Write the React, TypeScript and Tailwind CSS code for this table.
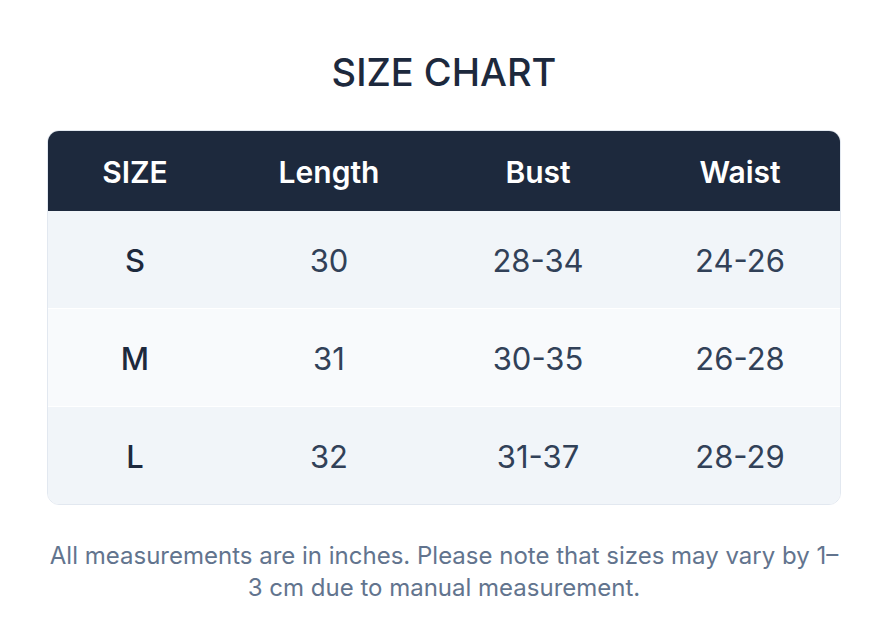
const rows = [
  { size: 'S', length: '30', bust: '28-34', waist: '24-26' },
  { size: 'M', length: '31', bust: '30-35', waist: '26-28' },
  { size: 'L', length: '32', bust: '31-37', waist: '28-29' },
];

const cols = 'grid grid-cols-[174px_214px_204px_1fr] items-center text-center';

export default function App() {
  return (
    <div className="min-h-screen bg-white font-['Inter',sans-serif] pt-[49px]">
      <div className="w-[794px] ml-[47px]">
        {/* Title */}
        <h1 className="text-center text-[38px] leading-[46px] font-medium text-slate-800 mb-[35px]">
          SIZE CHART
        </h1>

        {/* Table */}
        <div className="rounded-xl border border-slate-200 overflow-hidden">
          <div className={`${cols} h-[80px] pt-[3px] bg-slate-800 text-white text-[30px] font-semibold`}>
            <div>SIZE</div>
            <div>Length</div>
            <div>Bust</div>
            <div>Waist</div>
          </div>
          {rows.map((r, i) => (
            <div
              key={r.size}
              className={`${cols} pt-[3px] text-[31px] text-slate-700 ${
                i % 2 === 0 ? 'bg-slate-100' : 'bg-slate-50'
              } ${i > 0 ? 'h-[98px] border-t border-white' : 'h-[97px]'}`}
            >
              <div className="font-medium text-slate-800">{r.size}</div>
              <div>{r.length}</div>
              <div>{r.bust}</div>
              <div>{r.waist}</div>
            </div>
          ))}
        </div>

        {/* Note */}
        <p className="mt-[35px] text-center text-[24px] leading-[32px] text-slate-500">
          All measurements are in inches. Please note that sizes may vary by 1–3 cm due to manual measurement.
        </p>
      </div>
    </div>
  );
}
